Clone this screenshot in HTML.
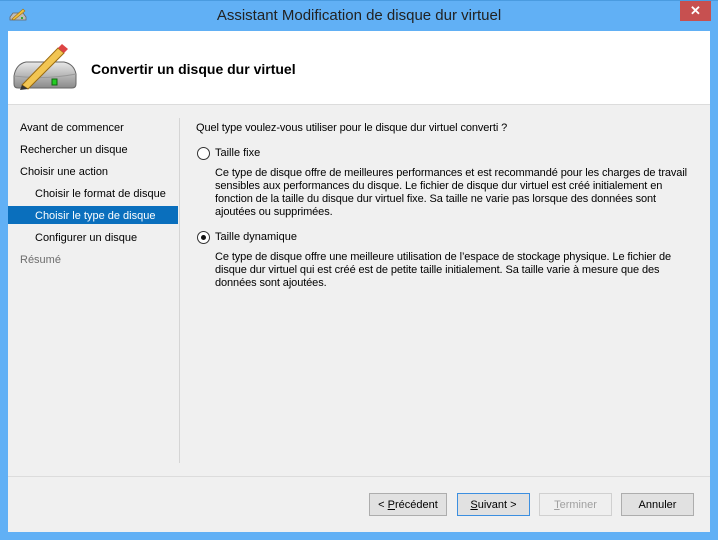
<!DOCTYPE html><html><head><style>
*{margin:0;padding:0;box-sizing:border-box}
body{width:718px;height:540px;background:#61b0f5;position:relative;overflow:hidden;font-family:"Liberation Sans",sans-serif;font-size:11px;color:#000}
.a{position:absolute;white-space:nowrap}
.p{letter-spacing:-0.1px}
.btn{position:absolute;top:493px;height:23px;border:1px solid #adadad;background:#e1e1e1;text-align:center;line-height:22px;font-size:11px}
.nav{position:absolute;left:20px;white-space:nowrap;line-height:14px}
</style></head><body>
<div class="a" style="left:0;top:0;width:718px;height:1px;background:#4a9be0"></div>
<svg class="a" style="left:8px;top:6px" width="20" height="16" viewBox="0 0 20 16"><path d="M2 11 L5 7 L15 7 L18 11 L18 14 L2 14Z" fill="#bbb" stroke="#666" stroke-width=".8"/><path d="M4 13 L15 3 L17 5 L6 14Z" fill="#f0c040" stroke="#a07010" stroke-width=".6"/><rect x="13" y="11" width="2" height="2" fill="#3a3"/></svg>
<div class="a" style="left:0;top:7px;width:718px;text-align:center;font-size:15px;color:#222">Assistant Modification de disque dur virtuel</div>
<div class="a" style="left:680px;top:1px;width:31px;height:20px;background:#c75050;color:#fff;text-align:center;font-size:13px;font-weight:bold;line-height:20px">✕</div>
<div class="a" style="left:8px;top:31px;width:702px;height:501px;background:#f0f0f0"></div>
<div class="a" style="left:8px;top:31px;width:702px;height:74px;background:#fff;border-bottom:1px solid #dcdcdc"></div>
<svg class="a" style="left:10px;top:40px" width="68" height="52" viewBox="0 0 68 52"><defs><linearGradient id="g" x1="0" y1="0" x2="0" y2="1"><stop offset="0" stop-color="#e8e8e8"/><stop offset="1" stop-color="#8a8a8a"/></linearGradient></defs><path d="M4 36 Q6 24 16 22 L54 22 Q64 24 66 34 L66 44 Q66 48 62 48 L8 48 Q4 48 4 44Z" fill="url(#g)" stroke="#666"/><path d="M4 36 Q35 40 66 34" stroke="#999" fill="none"/><rect x="42" y="39" width="5" height="6" fill="#2c2" stroke="#161"/><path d="M12 45 L48 8 L54 13 L18 49Z" fill="#f2c552" stroke="#9a6a10"/><path d="M48 8 L52 4 L58 9 L54 13Z" fill="#d44"/><path d="M12 45 L10 50 L18 49Z" fill="#333"/></svg>
<div class="a" style="left:91px;top:61px;font-size:14px;font-weight:bold">Convertir un disque dur virtuel</div>
<div class="nav" style="top:121px">Avant de commencer</div>
<div class="nav" style="top:143px">Rechercher un disque</div>
<div class="nav" style="top:165px">Choisir une action</div>
<div class="nav" style="top:187px;left:35px">Choisir le format de disque</div>
<div class="a" style="left:8px;top:206px;width:170px;height:18px;background:#0a6fbd"></div>
<div class="nav" style="top:209px;left:35px;color:#fff">Choisir le type de disque</div>
<div class="nav" style="top:231px;left:35px">Configurer un disque</div>
<div class="nav" style="top:253px;color:#6d6d6d">Résumé</div>
<div class="a" style="left:179px;top:118px;width:1px;height:345px;background:#d5d5d5"></div>
<div class="a p" style="left:196px;top:122px">Quel type voulez-vous utiliser pour le disque dur virtuel converti ?</div>
<div class="a" style="left:197px;top:147px;width:13px;height:13px;border:1px solid #333;border-radius:50%;background:#fff"></div>
<div class="a" style="left:215px;top:147px">Taille fixe</div>
<div class="a p" style="left:215px;top:167px;line-height:13px">Ce type de disque offre de meilleures performances et est recommandé pour les charges de travail<br>sensibles aux performances du disque. Le fichier de disque dur virtuel est créé initialement en<br>fonction de la taille du disque dur virtuel fixe. Sa taille ne varie pas lorsque des données sont<br>ajoutées ou supprimées.</div>
<div class="a" style="left:197px;top:231px;width:13px;height:13px;border:1px solid #333;border-radius:50%;background:#fff"></div>
<div class="a" style="left:201px;top:235px;width:5px;height:5px;border-radius:50%;background:#111"></div>
<div class="a" style="left:215px;top:231px">Taille dynamique</div>
<div class="a p" style="left:215px;top:251px;line-height:13px">Ce type de disque offre une meilleure utilisation de l’espace de stockage physique. Le fichier de<br>disque dur virtuel qui est créé est de petite taille initialement. Sa taille varie à mesure que des<br>données sont ajoutées.</div>
<div class="a" style="left:8px;top:476px;width:702px;height:1px;background:#dcdcdc"></div>
<div class="btn" style="left:369px;width:78px">&lt; <u>P</u>récédent</div>
<div class="btn" style="left:457px;width:73px;border-color:#3c8fe0"><u>S</u>uivant &gt;</div>
<div class="btn" style="left:539px;width:73px;border-color:#d0d0d0;background:#efefef;color:#a0a0a0"><u>T</u>erminer</div>
<div class="btn" style="left:621px;width:73px">Annuler</div>
</body></html>
